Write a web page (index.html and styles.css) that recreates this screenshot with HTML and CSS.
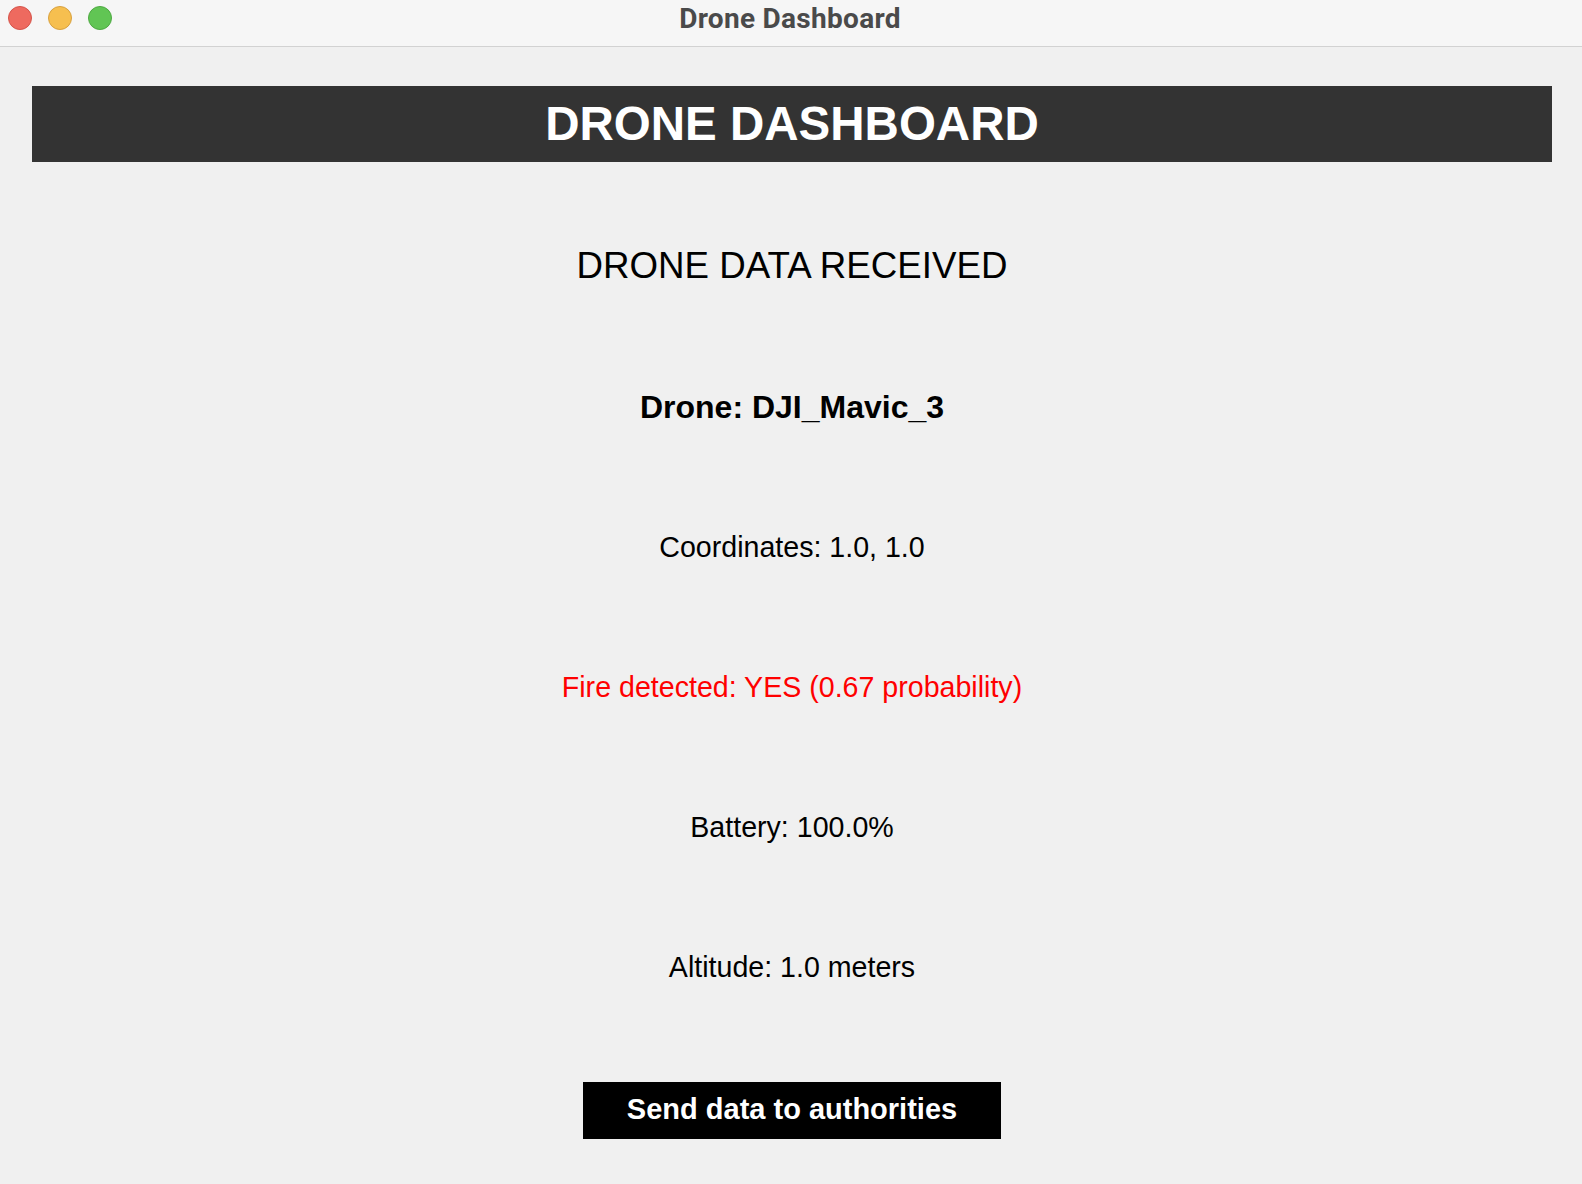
FILE: index.html
```html
<!DOCTYPE html>
<html lang="en">
<head>
<meta charset="utf-8">
<title>Drone Dashboard</title>
<link rel="stylesheet" href="styles.css">
</head>
<body>
<div class="window">
  <div class="titlebar">
    <div class="lights">
      <span class="light red"></span>
      <span class="light yellow"></span>
      <span class="light green"></span>
    </div>
    <div class="wtitle">Drone Dashboard</div>
  </div>
  <main class="content">
    <header class="banner">DRONE DASHBOARD</header>
    <section class="rows">
      <div class="row heading">DRONE DATA RECEIVED</div>
      <div class="row name">Drone: DJI_Mavic_3</div>
      <div class="row">Coordinates: 1.0, 1.0</div>
      <div class="row fire">Fire detected: YES (0.67 probability)</div>
      <div class="row">Battery: 100.0%</div>
      <div class="row">Altitude: 1.0 meters</div>
    </section>
    <div class="actions">
      <button class="send" type="button">Send data to authorities</button>
    </div>
  </main>
</div>
</body>
</html>
```

FILE: styles.css
```css
html, body {
  margin: 0;
  padding: 0;
  background: #f0f0f0;
}

.window {
  width: 1582px;
  height: 1184px;
  overflow: hidden;
  display: flex;
  flex-direction: column;
  font-family: "Liberation Sans", Arial, sans-serif;
}

.titlebar {
  position: relative;
  height: 46px;
  flex: 0 0 46px;
  background: #f6f6f6;
  border-bottom: 1px solid #d2d2d2;
  display: flex;
  align-items: center;
  justify-content: center;
}

.lights {
  position: absolute;
  left: 8px;
  top: 6px;
  display: flex;
  gap: 16px;
}

.light {
  width: 22px;
  height: 22px;
  border-radius: 50%;
  display: block;
}

.red { background: #ee6a5f; border: 1px solid #d5544a; }
.yellow { background: #f6bf4f; border: 1px solid #d8a140; }
.green { background: #61c554; border: 1px solid #4ea942; }

.wtitle {
  font-family: Roboto, "Liberation Sans", sans-serif;
  font-weight: 700;
  font-size: 28px;
  color: #4a4a4a;
  letter-spacing: 0.3px;
  margin-left: -2px;
  margin-top: -10px;
}

.content {
  flex: 1;
  padding: 39px 30px 0 32px;
  display: flex;
  flex-direction: column;
}

.banner {
  height: 76px;
  background: #333333;
  color: #ffffff;
  font-weight: 700;
  font-size: 47.5px;
  line-height: 75px;
  text-align: center;
}

.rows {
  margin-top: 35px;
  display: flex;
  flex-direction: column;
}

.row {
  height: 140px;
  line-height: 140px;
  text-align: center;
  font-size: 28.6px;
  color: #000000;
}

.heading {
  font-size: 36.7px;
  line-height: 138px;
}

.name {
  font-weight: 700;
  font-size: 32px;
}

.fire {
  color: #ff0000;
}

.actions {
  display: flex;
  justify-content: center;
  margin-top: 45px;
}

.send {
  height: 57px;
  width: 418px;
  border: none;
  border-radius: 0;
  background: #000000;
  color: #ffffff;
  font-family: "Liberation Sans", Arial, sans-serif;
  font-weight: 700;
  font-size: 29px;
  padding: 0 0 3px 0;
  cursor: pointer;
}
```
